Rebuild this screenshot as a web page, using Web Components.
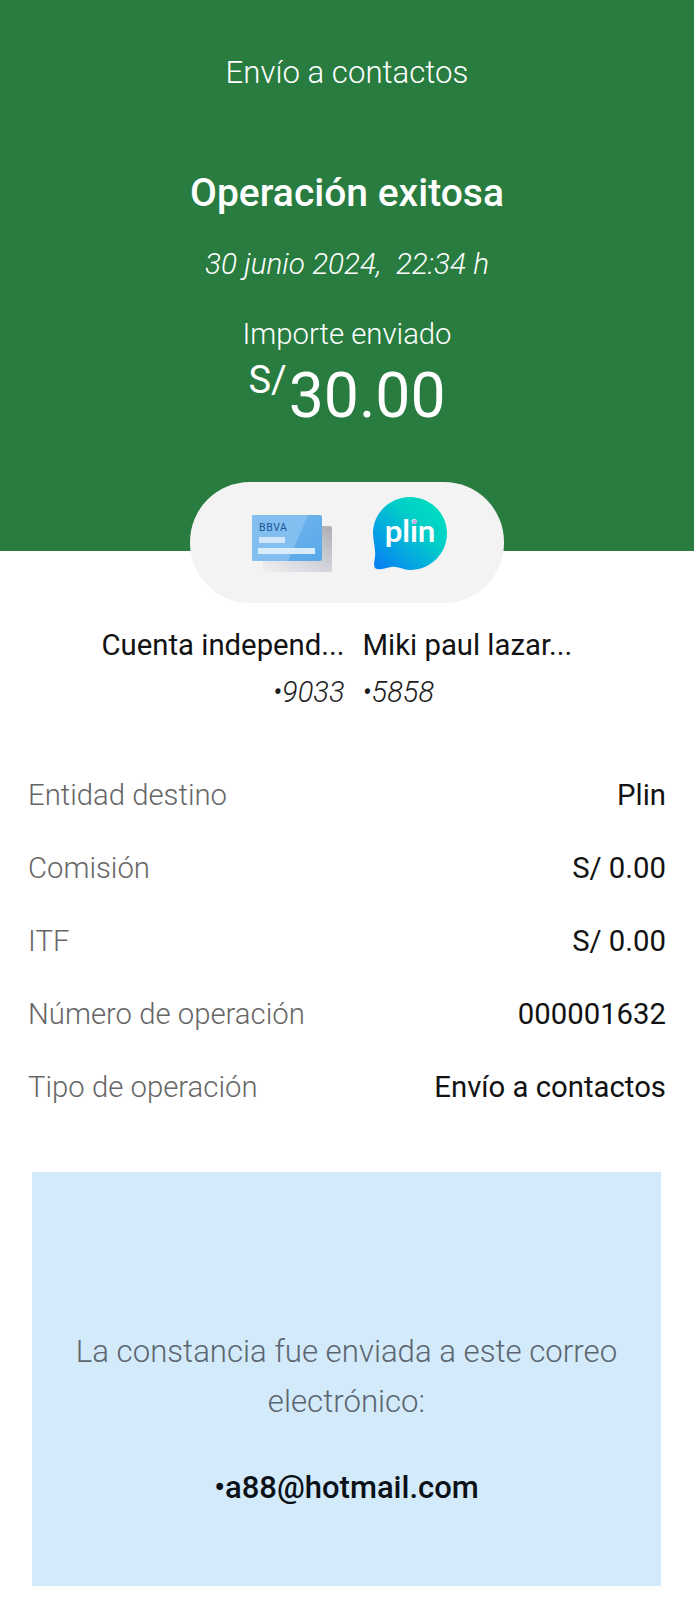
<!DOCTYPE html>
<html lang="es">
<head>
<meta charset="utf-8">
<title>Operación exitosa</title>
<style>
  html, body { margin: 0; padding: 0; background: #fff; }
  body { font-family: Roboto, "Liberation Sans", sans-serif; width: 694px; height: 1600px; overflow: hidden; }
</style>
</head>
<body>
<op-hero></op-hero>
<op-accounts></op-accounts>
<op-details>
  <op-row label="Entidad destino" value="Plin"></op-row>
  <op-row label="Comisión" value="S/ 0.00"></op-row>
  <op-row label="ITF" value="S/ 0.00"></op-row>
  <op-row label="Número de operación" value="000001632"></op-row>
  <op-row label="Tipo de operación" value="Envío a contactos"></op-row>
</op-details>
<op-notice email="•a88@hotmail.com">La constancia fue enviada a este correo electrónico:</op-notice>

<script>
class OpHero extends HTMLElement {
    constructor() {
        super();
        this.attachShadow({ mode: 'open' });
        this.shadowRoot.innerHTML = `
            <style>
                :host {
                    display: flex;
                    flex-direction: column;
                    align-items: center;
                    height: 551px;
                    background: #287c40;
                    color: #fff;
                    box-sizing: border-box;
                    padding-top: 55px;
                }
                .service { font-size: 31.2px; font-weight: 300; line-height: 36px; }
                .title { font-size: 39px; font-weight: 500; line-height: 42px; margin-top: 81px; }
                .date { font-size: 29.7px; font-weight: 300; font-style: italic; line-height: 34px; margin-top: 33px; white-space: pre; }
                .label { font-size: 29.3px; font-weight: 300; line-height: 36px; margin-top: 35px; }
                .amount { display: flex; align-items: flex-start; margin-top: 10px; line-height: 68px; font-size: 62.5px; font-weight: 400; }
                .amount span { font-size: 38px; line-height: 40px; font-weight: 400; margin: -2px 2px 0 0; }
            </style>
            <div class="service">Envío a contactos</div>
            <div class="title">Operación exitosa</div>
            <div class="date">30 junio 2024,  22:34 h</div>
            <div class="label">Importe enviado</div>
            <div class="amount"><span>S/</span>30.00</div>
        `;
    }
}

class OpAccounts extends HTMLElement {
    constructor() {
        super();
        this.attachShadow({ mode: 'open' });
        this.shadowRoot.innerHTML = `
            <style>
                :host { display: flex; flex-direction: column; align-items: center; margin-top: -69px; }
                .pill {
                    width: 314px;
                    height: 121px;
                    border-radius: 60px;
                    background: #f3f3f4;
                    display: flex;
                    align-items: flex-start;
                    padding: 33px 0 0 62px;
                    box-sizing: border-box;
                    gap: 39px;
                }
                .plin { margin-top: -18px; }
                .names {
                    display: grid;
                    grid-template-columns: 249px 252px;
                    column-gap: 18px;
                    margin-left: 16px;
                    width: 519px;
                    margin-top: 19px;
                }
                .name { font-size: 29.3px; line-height: 46px; color: #121212; white-space: nowrap; }
                .num { font-size: 29px; line-height: 48px; font-style: italic; font-weight: 300; color: #1c1c1c; white-space: nowrap; }
                .l { text-align: right; }
                svg { display: block; flex: none; }
            </style>
            <div class="pill">
                <svg width="82" height="60" viewBox="0 0 82 60">
                    <defs>
                        <linearGradient id="back" x1="0" y1="1" x2="1" y2="0">
                            <stop offset="0" stop-color="#eeeff2"/>
                            <stop offset="0.55" stop-color="#d0d1d7"/>
                            <stop offset="1" stop-color="#adaeb5"/>
                        </linearGradient>
                        <linearGradient id="front" x1="0" y1="0" x2="1" y2="1">
                            <stop offset="0" stop-color="#76b9ee"/>
                            <stop offset="1" stop-color="#58a8e9"/>
                        </linearGradient>
                    </defs>
                    <rect x="11" y="11" width="69" height="46" rx="2" fill="url(#back)"/>
                    <rect x="0" y="0" width="70" height="46" rx="2" fill="url(#front)"/>
                    <path d="M0 2a2 2 0 0 1 2-2H56L36 46H2a2 2 0 0 1-2-2Z" fill="#82bff0"/>
                    <text x="7" y="15.5" font-family="Roboto, sans-serif" font-size="10.5" font-weight="400" letter-spacing="0.6" fill="#1d5597">BBVA</text>
                    <rect x="7" y="22" width="26" height="6" fill="#d2e7f9"/>
                    <rect x="6" y="33" width="57" height="6" fill="#d8ecfb"/>
                </svg>
                <svg class="plin" width="74" height="74" viewBox="0 0 74 74">
                    <defs>
                        <linearGradient id="plin" x1="0" y1="1" x2="1" y2="0">
                            <stop offset="0" stop-color="#0a78f5"/>
                            <stop offset="0.32" stop-color="#04a6e2"/>
                            <stop offset="0.6" stop-color="#02cdc8"/>
                            <stop offset="1" stop-color="#00e5bb"/>
                        </linearGradient>
                    </defs>
                    <path d="M37 0C57 0 74 16 74 36C74 57 57 73 37 73C30 73 25 69 18 70C12 71 8 73 4 72C0 71 1 66 2 60C3 52 0 45 0 36C0 16 17 0 37 0Z" fill="url(#plin)"/>
                    <text x="37" y="45" text-anchor="middle" font-family="Lato, sans-serif" font-size="31" font-weight="700" fill="#fff">plin</text>
                    <circle cx="41.5" cy="25" r="2.2" fill="#c7a6dd"/>
                </svg>
            </div>
            <div class="names">
                <div class="name l">Cuenta independ...</div>
                <div class="name">Miki paul lazar...</div>
                <div class="num l">•9033</div>
                <div class="num">•5858</div>
            </div>
        `;
    }
}

class OpDetails extends HTMLElement {
    constructor() {
        super();
        this.attachShadow({ mode: 'open' });
        this.shadowRoot.innerHTML = `
            <style>
                :host { display: flex; flex-direction: column; padding: 42px 28px 0; }
            </style>
            <slot></slot>
        `;
    }
}

class OpRow extends HTMLElement {
    constructor() {
        super();
        this.attachShadow({ mode: 'open' });
    }

    connectedCallback() {
        this.shadowRoot.innerHTML = `
            <style>
                :host {
                    display: flex;
                    justify-content: space-between;
                    align-items: center;
                    height: 73px;
                    font-size: 29.3px;
                }
                .label { font-weight: 300; color: #666; }
                .value { color: #121212; }
            </style>
            <span class="label">${this.getAttribute('label')}</span>
            <span class="value">${this.getAttribute('value')}</span>
        `;
    }
}

class OpNotice extends HTMLElement {
    constructor() {
        super();
        this.attachShadow({ mode: 'open' });
    }

    connectedCallback() {
        this.shadowRoot.innerHTML = `
            <style>
                :host {
                    display: block;
                    box-sizing: border-box;
                    width: 629px;
                    height: 414px;
                    margin: 49px 0 0 32px;
                    padding: 155px 30px 0;
                    background: #d3eafb;
                    text-align: center;
                }
                .text { font-size: 31.2px; font-weight: 300; line-height: 50px; color: #5c6670; }
                .email { font-size: 31px; font-weight: 500; color: #0b1117; line-height: 36px; margin-top: 43px; }
            </style>
            <div class="text"><slot></slot></div>
            <div class="email">${this.getAttribute('email')}</div>
        `;
    }
}

customElements.define('op-hero', OpHero);
customElements.define('op-accounts', OpAccounts);
customElements.define('op-details', OpDetails);
customElements.define('op-row', OpRow);
customElements.define('op-notice', OpNotice);
</script>
</body>
</html>
